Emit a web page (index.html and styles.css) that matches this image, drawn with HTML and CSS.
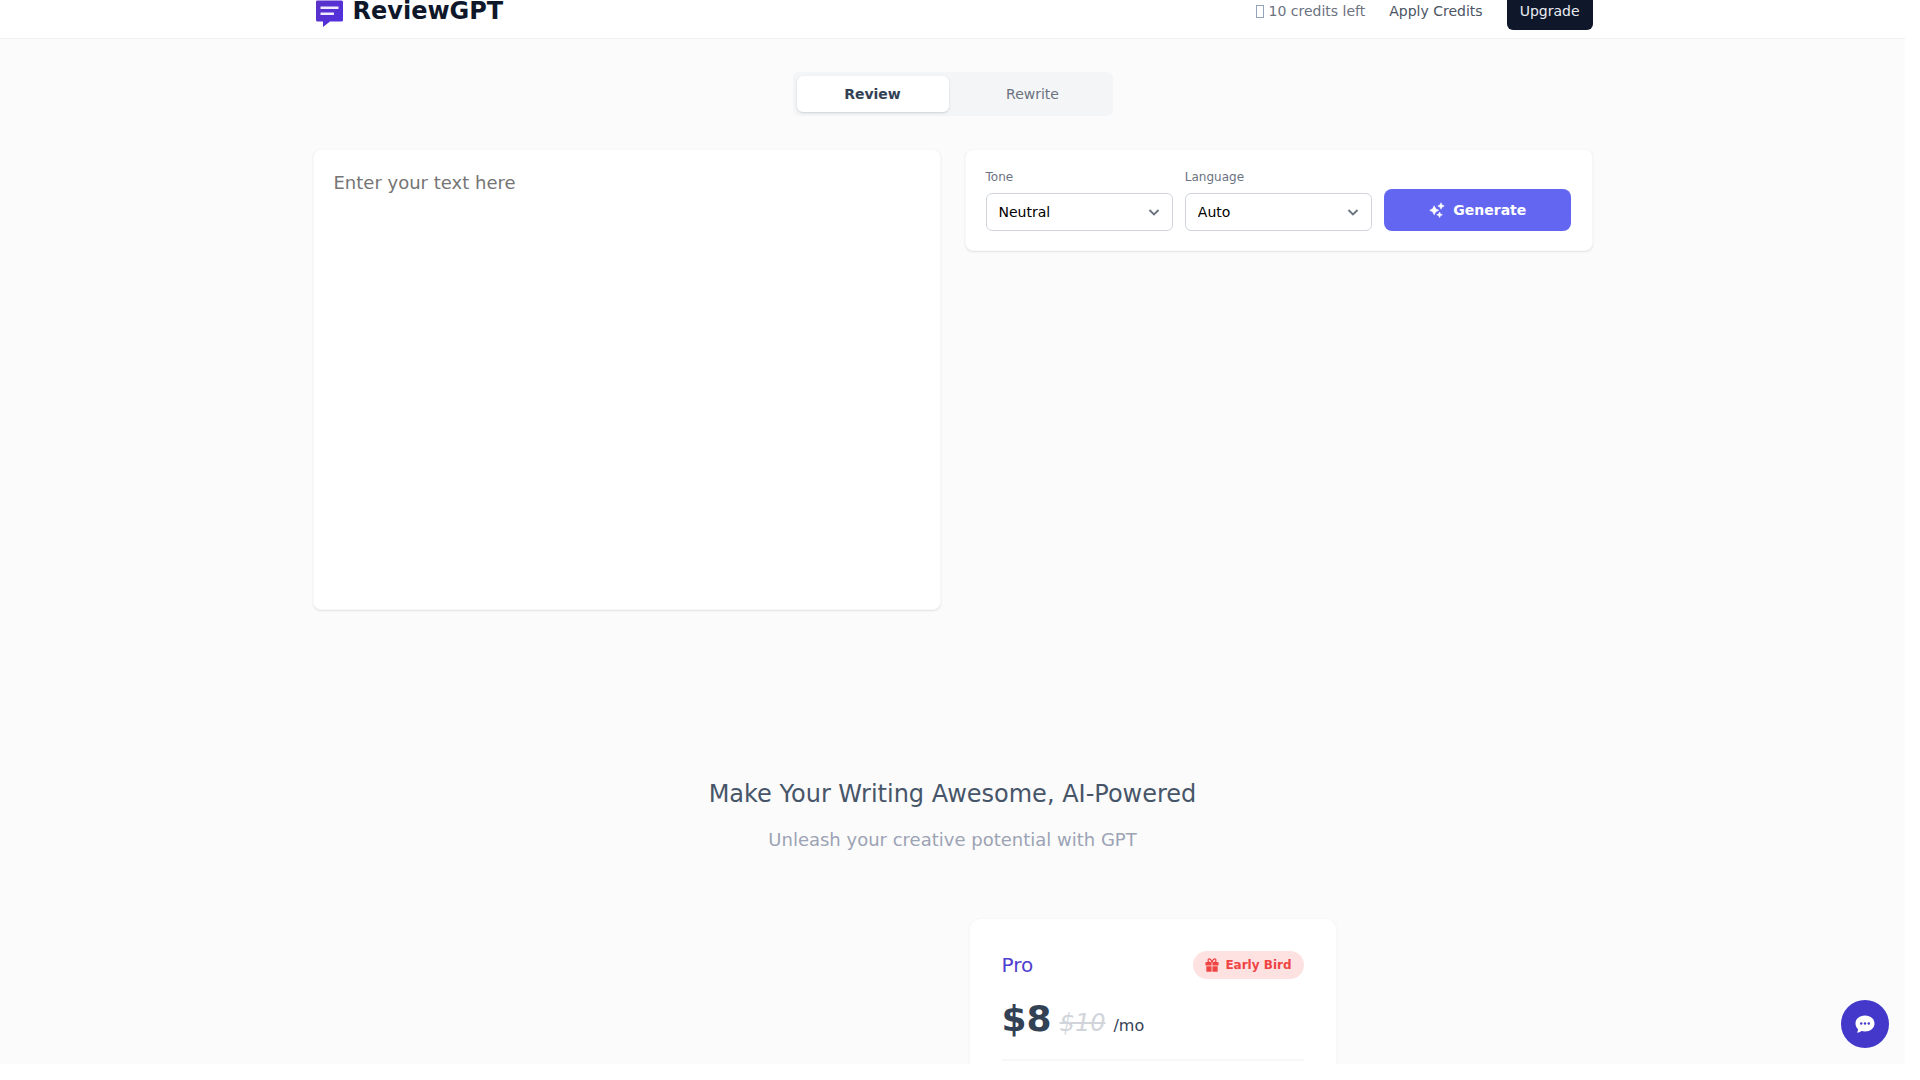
FILE: index.html
```html
<!DOCTYPE html>
<html lang="en">
<head>
    <meta charset="utf-8" />
    <meta name="viewport" content="width=device-width, initial-scale=1" />
    <title>ReviewGPT</title>
    <link rel="stylesheet" href="styles.css">
</head>
<body>
<div class="app">

    <header class="header">
        <div class="container header-inner">
            <a class="brand" href="#">
                <svg class="brand-logo" viewBox="0 0 32 32" aria-hidden="true">
                    <defs>
                        <linearGradient id="logo" x1="0" y1="0" x2="1" y2="1">
                            <stop offset="0" stop-color="#5b32c8" />
                            <stop offset="1" stop-color="#4f2fe0" />
                        </linearGradient>
                    </defs>
                    <path fill="url(#logo)" d="M4 5.500h24.500a1.500 1.500 0 0 1 1.500 1.500v18a1.500 1.500 0 0 1-1.500 1.500H17L10 32v-5.500H4.500a1.500 1.500 0 0 1-1.500-1.500V7a1.500 1.500 0 0 1 1-1.500z" />
                    <path fill="none" stroke="#efeaff" stroke-width="2.400" d="M7.500 12.700h18M7.500 18.700h13.500" />
                </svg>
                ReviewGPT
            </a>
            <nav class="nav">
                <span class="credits"><span class="credits-icon"></span>10 credits left</span>
                <a class="nav-link" href="#">Apply Credits</a>
                <button class="btn-dark" type="button">Upgrade</button>
            </nav>
        </div>
    </header>

    <main class="container">
        <div class="tabs" role="tablist">
            <button class="tab tab--active" type="button" role="tab" aria-selected="true">Review</button>
            <button class="tab" type="button" role="tab" aria-selected="false">Rewrite</button>
        </div>

        <section class="editor">
            <textarea class="card editor-input" placeholder="Enter your text here" aria-label="Text"></textarea>

            <form class="card options">
                <div class="field">
                    <label for="tone">Tone</label>
                    <div class="select">
                        <select id="tone">
                            <option>Neutral</option>
                        </select>
                        <svg viewBox="0 0 16 16" aria-hidden="true"><path d="M3.500 6L8 10.500 12.500 6" /></svg>
                    </div>
                </div>
                <div class="field">
                    <label for="language">Language</label>
                    <div class="select">
                        <select id="language">
                            <option>Auto</option>
                        </select>
                        <svg viewBox="0 0 16 16" aria-hidden="true"><path d="M3.500 6L8 10.500 12.500 6" /></svg>
                    </div>
                </div>
                <button class="btn-primary" type="button">
                    <svg viewBox="0 0 16 16" aria-hidden="true">
                        <path d="M5.200 3.800l1.500 3 3 1.500-3 1.500-1.500 3-1.500-3-3-1.500 3-1.500z" />
                        <path d="M12 .8l1 2.200 2.200 1-2.200 1-1 2.200L11 5 8.800 4 11 3z" />
                        <path d="M10.600 10l.8 1.900 2 .9-2 .9-.8 1.900-.8-1.900-2-.9 2-.9z" />
                    </svg>
                    Generate
                </button>
            </form>
        </section>

        <section class="intro">
            <h1>Make Your Writing Awesome, AI-Powered</h1>
            <p>Unleash your creative potential with GPT</p>
        </section>

        <section class="pricing">
            <article class="plan">
                <div class="plan-head">
                    <h2>Pro</h2>
                    <span class="badge">
                        <svg viewBox="0 0 16 16" aria-hidden="true">
                            <path fill="currentColor" d="M1.500 4.500h6v4H.5v-3a1 1 0 0 1 1-1zM8.500 4.500h6a1 1 0 0 1 1 1v3h-7zM1.500 9.500h6V15.800h-5a1 1 0 0 1-1-1zM8.500 9.500h6v5.300a1 1 0 0 1-1 1h-5z" />
                            <path fill="none" stroke="currentColor" stroke-width="1.500" d="M8 5C7 2 5.800 1 4.700 1.100 3 1.300 3 4.300 5 4.800M8 5c1-3 2.200-4 3.300-3.900 1.700.2 1.700 3.200-.3 3.700" />
                        </svg>
                        Early Bird
                    </span>
                </div>
                <div class="price">
                    <strong>$8</strong>
                    <del>$10</del>
                    <span>/mo</span>
                </div>
                <hr>
            </article>
        </section>
    </main>

    <button class="chat" type="button" aria-label="Open chat">
        <svg viewBox="0 0 24 24" aria-hidden="true">
            <path fill="#fff" d="M12 3.500c5.500 0 9.500 3.400 9.500 8s-4 8-9.500 8c-1.300 0-2.500-.2-3.600-.5-1.200.9-2.700 1.600-4.600 1.600.9-1 1.300-2.200 1.200-3.500C3.400 15.700 2.500 13.700 2.500 11.500c0-4.600 4-8 9.500-8z" />
            <g fill="#4338ca">
                <circle cx="8.200" cy="11.500" r="1.200" />
                <circle cx="12" cy="11.500" r="1.200" />
                <circle cx="15.800" cy="11.500" r="1.200" />
            </g>
        </svg>
    </button>

</div>
</body>
</html>
```
FILE: styles.css
```css
:root{
    --page:#fbfbfb;
    --border:#d1d5db;
    --card-border:#f8f8f9;
    --text:#334155;
    --muted:#6b7280;
    --indigo:#6366f1;
    --shadow:0 1px 3px rgba(0,0,0,.1), 0 1px 2px rgba(0,0,0,.06);
}
*{
    box-sizing:border-box;
}
body{
    margin:0;
    background:#fff;
    color:var(--text);
    font-family:"DejaVu Sans",sans-serif;
    font-size:16px;
    line-height:24px;
}
h1,h2,p{
    margin:0;
    font-weight:400;
}
button,select,textarea{
    font-family:inherit;
}
button{
    border:0;
    cursor:pointer;
}
a{
    color:inherit;
    text-decoration:none;
}

.app{
    position:relative;
    height:calc(100vh - 16px);
    margin-right:15px;
    overflow:hidden;
    background:var(--page);
}
.container{
    max-width:1280px;
    margin:0 auto;
}

/* header */
.header{
    margin-top:-16px;
    padding:8px 0;
    background:#fff;
    border-bottom:1px solid #f1f1f3;
}
.header-inner{
    display:flex;
    justify-content:space-between;
    align-items:center;
}
.brand{
    display:flex;
    align-items:center;
    gap:8px;
    color:#0f172a;
    font-size:24px;
    font-weight:700;
}
.brand-logo{
    width:32px;
    height:32px;
}
.nav{
    display:flex;
    align-items:center;
    gap:24px;
    font-size:14px;
}
.credits{
    display:flex;
    align-items:center;
    gap:5px;
    color:var(--muted);
}
.credits-icon{
    width:8px;
    height:13px;
    border:1px solid #94a3b8;
}
.nav-link{
    color:#4b5563;
}
.btn-dark{
    height:38px;
    padding:0 13px;
    border-radius:6px;
    background:#0f172a;
    color:#e9edf3;
    font-size:14px;
}

/* tabs */
.tabs{
    display:flex;
    gap:8px;
    max-width:320px;
    margin:33px auto;
    padding:4px;
    border-radius:6px;
    background:#f3f5f7;
}
.tab{
    flex:1;
    height:36px;
    padding:0;
    border-radius:6px;
    background:none;
    color:var(--muted);
    font-size:14px;
}
.tab--active{
    background:#fff;
    color:var(--text);
    font-weight:700;
    box-shadow:var(--shadow);
}

/* editor */
.card{
    border:1px solid var(--card-border);
    border-radius:8px;
    background:#fff;
    box-shadow:0 1px 2px rgba(0,0,0,.1);
}
.editor{
    display:grid;
    grid-template-columns:1fr 1fr;
    gap:24px;
    align-items:start;
}
.editor-input{
    display:block;
    width:100%;
    height:461px;
    padding:19px 20px;
    font-size:18px;
    line-height:28px;
    resize:none;
}
.editor-input::placeholder{
    color:#757575;
}
.options{
    display:grid;
    grid-template-columns:repeat(3,1fr);
    gap:12px;
    align-items:end;
    padding:19px 20px;
}
.field label{
    display:block;
    margin-bottom:8px;
    color:var(--muted);
    font-size:12px;
    line-height:16px;
}
.select{
    position:relative;
}
.select select{
    display:block;
    width:100%;
    height:38px;
    padding:0 12px;
    appearance:none;
    border:1px solid var(--border);
    border-radius:6px;
    background:#fff;
    color:#000;
    font-size:14px;
}
.select svg{
    position:absolute;
    top:11px;
    right:11px;
    width:16px;
    height:16px;
    fill:none;
    stroke:#6b7280;
    stroke-width:1.8;
    pointer-events:none;
}
.btn-primary{
    display:flex;
    justify-content:center;
    align-items:center;
    gap:8px;
    height:42px;
    border-radius:8px;
    background:var(--indigo);
    color:#fff;
    font-size:14px;
    font-weight:700;
}
.btn-primary svg{
    width:16px;
    height:16px;
    fill:#fff;
    stroke:#fff;
    stroke-width:.6;
    stroke-linejoin:round;
}

/* intro */
.intro{
    margin-top:168px;
    text-align:center;
}
.intro h1{
    color:#475569;
    font-size:24px;
    line-height:32px;
}
.intro p{
    margin-top:16px;
    color:#9ca3b4;
    font-size:18px;
    line-height:28px;
}

/* pricing, first column stays empty */
.pricing{
    display:grid;
    grid-template-columns:1fr 1fr;
    gap:32px;
    max-width:768px;
    margin:64px auto 0;
}
.plan{
    grid-column:2;
    padding:32px;
    border:1px solid var(--card-border);
    border-radius:12px;
    background:#fff;
    box-shadow:0 1px 3px rgba(0,0,0,.04);
}
.plan-head{
    display:flex;
    justify-content:space-between;
    align-items:center;
}
.plan h2{
    color:#4f3fce;
    font-size:20px;
    line-height:28px;
}
.badge{
    display:flex;
    align-items:center;
    gap:6px;
    height:28px;
    padding:0 12px;
    border-radius:14px;
    background:#fee2e2;
    color:#ef4444;
    font-size:12px;
    font-weight:700;
}
.badge svg{
    width:14px;
    height:14px;
}
.price{
    display:flex;
    align-items:baseline;
    gap:8px;
    height:40px;
    margin-top:20px;
    line-height:40px;
}
.price strong{
    font-size:36px;
}
.price del{
    color:#d1d5db;
    font-size:24px;
    font-style:italic;
}
.plan hr{
    height:2px;
    margin:20px 0;
    border:0;
    background:#f6f7f8;
}

/* chat launcher */
.chat{
    position:absolute;
    right:16px;
    bottom:16px;
    display:flex;
    justify-content:center;
    align-items:center;
    width:48px;
    height:48px;
    padding:0;
    border-radius:50%;
    background:#4338ca;
}
.chat svg{
    width:24px;
    height:24px;
}
```
